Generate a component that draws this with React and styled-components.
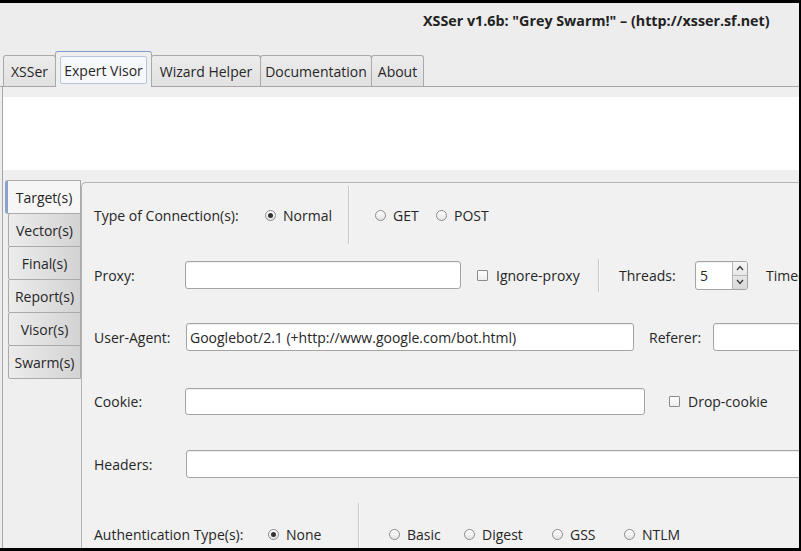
import React from 'react';
import styled, { createGlobalStyle } from 'styled-components';

const FONT = `"Open Sans", "DejaVu Sans", sans-serif`;

const Global = createGlobalStyle`
  html, body { margin: 0; padding: 0; background: #000; }
  body { font-family: ${FONT}; }
`;

const Frame = styled.div`
  width: 801px;
  height: 551px;
  box-sizing: border-box;
  background: #000;
  padding: 3px 2px 3px 0;
  overflow: hidden;
`;

const Win = styled.div`
  height: 100%;
  background: #ededed;
  display: flex;
  flex-direction: column;
  overflow: hidden;
  font-family: ${FONT};
  font-size: 14px;
  color: #262626;
`;

const TitleBar = styled.div`
  flex: none;
  height: 49px;
  box-sizing: border-box;
  padding: 8px 0 0 423px;
  font-weight: bold;
  font-size: 14.3px;
  line-height: 19px;
  white-space: nowrap;
  color: #222;
`;

const TabBar = styled.div`
  flex: none;
  height: 35px;
  box-sizing: border-box;
  display: flex;
  align-items: flex-end;
  padding-left: 3px;
  border-bottom: 1px solid #a6a6a6;
`;

const Tab = styled.div`
  flex: none;
  box-sizing: border-box;
  width: ${p => p.$w}px;
  height: ${p => (p.$active ? 36 : 31)}px;
  margin-left: ${p => (p.$first ? 0 : -1)}px;
  margin-bottom: ${p => (p.$active ? -1 : 0)}px;
  position: relative;
  z-index: ${p => (p.$active ? 2 : 1)};
  border: 1px solid #a9a9a9;
  border-top-color: ${p => (p.$active ? '#7f9cc6' : '#a9a9a9')};
  border-bottom: none;
  border-radius: 3px 3px 0 0;
  background: ${p => (p.$active ? '#efefef' : 'linear-gradient(#ececec, #e1e1e1)')};
  display: flex;
  align-items: center;
  justify-content: center;
  padding: ${p => (p.$active ? '4px 4px 3px' : '0')};
  white-space: nowrap;
`;

const Focus = styled.span`
  flex: 1;
  align-self: stretch;
  display: flex;
  align-items: center;
  justify-content: center;
  border: 1px solid #b9c7dc;
  border-radius: 2px;
  background: #f6f8fb;
`;

const Page = styled.div`
  flex: 1;
  min-height: 0;
  margin-left: 2px;
  border-left: 1px solid #a6a6a6;
  display: flex;
  flex-direction: column;
  background: #efefef;
`;

const Strip = styled.div`
  flex: none;
  height: ${p => p.$h}px;
  background: ${p => p.$bg || 'transparent'};
`;

const VNotebook = styled.div`
  flex: 1;
  min-height: 0;
  display: flex;
`;

const VTabs = styled.div`
  flex: none;
  width: 78px;
  display: flex;
  flex-direction: column;
`;

const VTab = styled.div`
  flex: none;
  box-sizing: border-box;
  height: 34px;
  margin-top: ${p => (p.$first ? 0 : -1)}px;
  margin-left: ${p => (p.$active ? 2 : 5)}px;
  border: 1px solid #aaaaaa;
  border-left: ${p => (p.$active ? '3px solid #8aa3c9' : '1px solid #aaaaaa')};
  border-radius: ${p => (p.$active ? '3px 0 0 3px' : '2px 0 0 2px')};
  background: ${p => (p.$active ? '#f6f6f6' : 'linear-gradient(to right, #ececec, #d3d3d3)')};
  display: flex;
  align-items: center;
  justify-content: center;
  white-space: nowrap;
  position: relative;
  z-index: ${p => (p.$active ? 2 : 1)};
`;

const Panel = styled.div`
  flex: 1;
  min-width: 0;
  margin-top: 2px;
  border-top: 1px solid #b3b3b3;
  border-left: 1px solid #b3b3b3;
  border-top-left-radius: 5px;
  background: #f1f1f1;
  overflow: hidden;
  display: flex;
  flex-direction: column;
`;

const Row = styled.div`
  flex: none;
  height: ${p => p.$h}px;
  display: flex;
  align-items: center;
  padding-left: 12px;
  white-space: nowrap;
`;

const Label = styled.span`
  flex: none;
  width: ${p => (p.$w ? `${p.$w}px` : 'auto')};
  margin-left: ${p => p.$ml || 0}px;
`;

const Field = styled.div`
  flex: none;
  box-sizing: border-box;
  width: ${p => p.$w}px;
  height: ${p => p.$h || 28}px;
  background: #fff;
  border: 1px solid #a4a4a4;
  border-radius: 3px;
  box-shadow: inset 0 1px 1px rgba(0, 0, 0, 0.07);
  display: flex;
  align-items: center;
  padding-left: 3px;
  color: #262626;
`;

const VSep = styled.div`
  flex: none;
  width: 1px;
  height: ${p => p.$h}px;
  background: #c6c6c6;
  box-shadow: 1px 0 0 #fafafa;
  margin-left: ${p => p.$ml || 0}px;
`;

const Option = styled.span`
  flex: none;
  display: inline-flex;
  align-items: center;
  width: ${p => (p.$w ? `${p.$w}px` : 'auto')};
  margin-left: ${p => p.$ml || 0}px;
`;

const Radio = styled.span`
  flex: none;
  box-sizing: border-box;
  width: 11px;
  height: 11px;
  margin-right: 7px;
  border: 1px solid #8c8c8c;
  border-radius: 50%;
  background: linear-gradient(#ffffff, #e4e4e4);
  display: flex;
  align-items: center;
  justify-content: center;
  &::after {
    content: '';
    display: ${p => (p.$on ? 'block' : 'none')};
    width: 5px;
    height: 5px;
    border-radius: 50%;
    background: #333;
  }
`;

const Check = styled.span`
  flex: none;
  box-sizing: border-box;
  width: 11px;
  height: 11px;
  margin-right: 8px;
  border: 1px solid #8c8c8c;
  border-radius: 1px;
  background: linear-gradient(#ffffff, #ededed);
`;

const Spin = styled.div`
  flex: none;
  box-sizing: border-box;
  width: 53px;
  height: 29px;
  display: flex;
  background: #fff;
  border: 1px solid #a4a4a4;
  border-radius: 3px;
  overflow: hidden;
  box-shadow: inset 0 1px 1px rgba(0, 0, 0, 0.07);
`;

const SpinValue = styled.span`
  flex: 1;
  display: flex;
  align-items: center;
  padding-left: 4px;
`;

const SpinArrows = styled.div`
  flex: none;
  width: 14px;
  display: flex;
  flex-direction: column;
  border-left: 1px solid #b5b5b5;
  background: linear-gradient(#f6f6f6, #d8d8d8);
`;

const SpinHalf = styled.div`
  flex: 1;
  display: flex;
  align-items: center;
  justify-content: center;
  border-top: ${p => (p.$bottom ? '1px solid #b8b8b8' : 'none')};
`;

const Caret = ({ up }) => (
  <svg width="8" height="6" viewBox="0 0 8 6">
    <polyline
      points={up ? '1,5 4,1.5 7,5' : '1,1 4,4.5 7,1'}
      fill="none"
      stroke="#3a3a3a"
      strokeWidth="1.3"
    />
  </svg>
);

const tabs = [
  { t: 'XSSer', w: 53 },
  { t: 'Expert Visor', w: 97, active: true },
  { t: 'Wizard Helper', w: 110 },
  { t: 'Documentation', w: 112 },
  { t: 'About', w: 53 },
];

const vtabs = ['Target(s)', 'Vector(s)', 'Final(s)', 'Report(s)', 'Visor(s)', 'Swarm(s)'];

export default function App() {
  return (
    <>
      <Global />
      <Frame>
        <Win>
          <TitleBar>XSSer v1.6b: "Grey Swarm!" – (http://xsser.sf.net)</TitleBar>
          <TabBar>
            {tabs.map((t, i) => (
              <Tab key={t.t} $w={t.w} $active={t.active} $first={i === 0}>
                {t.active ? <Focus>{t.t}</Focus> : t.t}
              </Tab>
            ))}
          </TabBar>
          <Page>
            <Strip $h={10} />
            <Strip $h={73} $bg="#ffffff" />
            <Strip $h={10} />
            <VNotebook>
              <VTabs>
                {vtabs.map((v, i) => (
                  <VTab key={v} $first={i === 0} $active={i === 0}>
                    {v}
                  </VTab>
                ))}
              </VTabs>
              <Panel>
                <Row $h={64}>
                  <Label $w={171}>Type of Connection(s):</Label>
                  <Option $w={83}>
                    <Radio $on />
                    Normal
                  </Option>
                  <VSep $h={58} />
                  <Option $ml={26} $w={61}>
                    <Radio />
                    GET
                  </Option>
                  <Option>
                    <Radio />
                    POST
                  </Option>
                </Row>
                <Row $h={56}>
                  <Label $w={91}>Proxy:</Label>
                  <Field $w={276} />
                  <Option $ml={16} $w={121}>
                    <Check />
                    Ignore-proxy
                  </Option>
                  <VSep $h={33} />
                  <Label $ml={20} $w={76}>Threads:</Label>
                  <Spin>
                    <SpinValue>5</SpinValue>
                    <SpinArrows>
                      <SpinHalf>
                        <Caret up />
                      </SpinHalf>
                      <SpinHalf $bottom>
                        <Caret />
                      </SpinHalf>
                    </SpinArrows>
                  </Spin>
                  <Label $ml={18}>Timeout:</Label>
                </Row>
                <Row $h={68}>
                  <Label $w={92}>User-Agent:</Label>
                  <Field $w={448}>Googlebot/2.1 (+http://www.google.com/bot.html)</Field>
                  <Label $ml={15} $w={64}>Referer:</Label>
                  <Field $w={200} />
                </Row>
                <Row $h={60}>
                  <Label $w={91}>Cookie:</Label>
                  <Field $w={460} $h={27} />
                  <Option $ml={24}>
                    <Check />
                    Drop-cookie
                  </Option>
                </Row>
                <Row $h={66}>
                  <Label $w={92}>Headers:</Label>
                  <Field $w={700} />
                </Row>
                <Row $h={74}>
                  <Label $w={174}>Authentication Type(s):</Label>
                  <Option $w={90}>
                    <Radio $on />
                    None
                  </Option>
                  <VSep $h={62} />
                  <Option $ml={30} $w={75}>
                    <Radio />
                    Basic
                  </Option>
                  <Option $w={88}>
                    <Radio />
                    Digest
                  </Option>
                  <Option $w={72}>
                    <Radio />
                    GSS
                  </Option>
                  <Option>
                    <Radio />
                    NTLM
                  </Option>
                </Row>
              </Panel>
            </VNotebook>
          </Page>
        </Win>
      </Frame>
    </>
  );
}
